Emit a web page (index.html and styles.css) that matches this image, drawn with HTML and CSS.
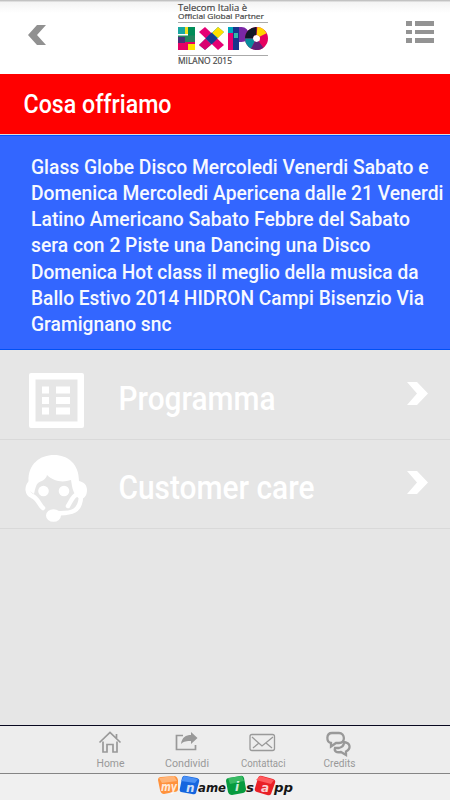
FILE: index.html
```html
<!DOCTYPE html>
<html lang="it">
<head>
<meta charset="utf-8">
<title>Cosa offriamo</title>
<link rel="stylesheet" href="styles.css">
</head>
<body>
<header class="topbar">
  <svg class="back" width="20" height="22" viewBox="0 0 20 22"><path d="M10 1h9l-9 10 9 10h-9L1 11z"/></svg>
  <svg class="brand" width="96" height="70" viewBox="0 0 96 70">
    <g class="brand-text">
      <text x="3" y="11" font-size="9.500" textLength="69" lengthAdjust="spacingAndGlyphs">Telecom Italia è</text>
      <text x="3" y="19" font-size="8" textLength="86" lengthAdjust="spacingAndGlyphs">Official Global Partner</text>
      <text x="3" y="64" font-size="8.500" textLength="54" lengthAdjust="spacingAndGlyphs">MILANO 2015</text>
    </g>
    <path d="M3 22.500h90M3 55.500h90" stroke="#aaa"/>
    <g>
      <path fill="#f2e01c" d="M3 27h17v7H3z"/><path fill="#18a7a1" d="M3 27h7v7H3z"/>
      <path fill="#008d58" d="M13 27h7v15h-7z"/><path fill="#23845d" d="M3 35.500h17V42H3z"/>
      <path fill="#e50065" d="M3 42h17v8H3z"/><path fill="#463078" d="M3 37h7v6H3z"/>
      <path fill="#ffe100" d="M13 44h7v6h-7z"/>
      <path fill="#e50075" d="M24 32l6-5 19 18-6 5z"/><path fill="#00a5bd" d="M43 27l6 5-19 18-6-5z"/>
      <path fill="#ffe000" d="M37 33l6-6 6 5-6 6z"/><path fill="#173b90" d="M30.500 38.500l6-6 6 6-6 6z"/>
      <path fill="#d90070" d="M24 45l6.500-6.500 6 6L30 50z"/>
      <path fill="#00a9bd" d="M53 27h11v7H53z"/><path fill="#7927a5" d="M64 27h2.500a7.500 7.500 0 0 1 0 15H64z"/>
      <path fill="#e60073" d="M53 33h5v17h-5z"/><path fill="#19358c" d="M58 27h6v23h-6z"/>
      <path fill="#31baa8" d="M59 33h4v5h-4z"/>
    </g>
    <g fill="none" stroke-width="8">
      <circle cx="81.500" cy="38.500" r="7.500" stroke="#e60060"/>
      <path stroke="#111827" d="M81.500 31a7.500 7.500 0 0 0-7.500 7.500"/>
      <path stroke="#078d9b" d="M74 38.500a7.500 7.500 0 0 0 4 6.600"/>
      <path stroke="#ffd400" d="M82 31a7.500 7.500 0 0 1 6 4"/>
      <path stroke="#612078" d="M78 45a7.500 7.500 0 0 0 8-.5"/>
    </g>
  </svg>
  <svg class="menu" width="28" height="23" viewBox="0 0 28 23"><path d="M0 0h6v5H0zM9 0h19v5H9zM0 9h6v4H0zM9 9h19v4H9zM0 17h6v5H0zM9 17h19v5H9z"/></svg>
</header>
<h1 class="title"><svg width="450" height="59"><text x="23.500" y="38.500" textLength="148" lengthAdjust="spacingAndGlyphs">Cosa offriamo</text></svg></h1>
<section class="description">
  <svg width="450" height="213">
    <text x="31" y="37.600" textLength="397.500" lengthAdjust="spacingAndGlyphs">Glass Globe Disco Mercoledi Venerdi Sabato e</text>
    <text x="31" y="63.800" textLength="412.500" lengthAdjust="spacingAndGlyphs">Domenica Mercoledi Apericena dalle 21 Venerdi</text>
    <text x="31" y="90.200" textLength="379" lengthAdjust="spacingAndGlyphs">Latino Americano Sabato Febbre del Sabato</text>
    <text x="31" y="116.200" textLength="339.500" lengthAdjust="spacingAndGlyphs">sera con 2 Piste una Dancing una Disco</text>
    <text x="31" y="142.600" textLength="387.500" lengthAdjust="spacingAndGlyphs">Domenica Hot class il meglio della musica da</text>
    <text x="31" y="168.800" textLength="393" lengthAdjust="spacingAndGlyphs">Ballo Estivo 2014 HIDRON Campi Bisenzio Via</text>
    <text x="31" y="195" textLength="140.500" lengthAdjust="spacingAndGlyphs">Gramignano snc</text>
  </svg>
</section>
<main class="list">
  <a class="row">
    <svg width="450" height="89" viewBox="0 0 450 89">
      <path fill-rule="evenodd" d="M31 23h51a2 2 0 0 1 2 2v51a2 2 0 0 1-2 2H31a2 2 0 0 1-2-2V25a2 2 0 0 1 2-2zM35.500 29.500v42h42v-42z"/>
      <path d="M42 36.500h7v7h-7zM56 36.500h14v7H56zM42 47h7v7h-7zM56 47h14v7H56zM42 57.500h7v7h-7zM56 57.500h14v7H56z"/>
      <text x="118.500" y="60" textLength="157" lengthAdjust="spacingAndGlyphs">Programma</text>
      <path d="M407 32h10l11 11.500L417 55h-10l10-11.500z"/>
    </svg>
  </a>
  <a class="row">
    <svg width="450" height="88" viewBox="0 0 450 88">
      <path d="M28.500 41C28 24 40 15 54 15s25 9 25 26c5 1 8 4 8 9 0 6-3 9-7 9-4-2-7-7-8-13l-1-6c-9 3-18 1-24-5-1 5-6 6-9 8-2 2-3 6-4 11l-6-4z"/>
      <path class="line" d="M31 42c-5 5-4 12 1 14 6 2 7 9 11 12M76 55c-3 1-5 6-8 11M81 57c-1 14-8 17-26 16"/>
      <circle cx="43.500" cy="51" r="5.300"/><circle cx="64" cy="51" r="5.300"/>
      <ellipse cx="53.500" cy="75.500" rx="7.500" ry="6.300"/>
      <text x="118.500" y="59" textLength="196" lengthAdjust="spacingAndGlyphs">Customer care</text>
      <path d="M407 31h10l11 11.500L417 54h-10l10-11.500z"/>
    </svg>
  </a>
</main>
<nav class="tabs">
  <svg width="450" height="47" viewBox="0 0 450 47">
    <g class="icons">
      <path d="M99.500 16.500l10.500-10 10.500 10M116.500 12V8M103 15.500v10.500h4v-7.500h6v7.500h4V15.500"/>
      <path d="M183 9.500h-6.500v14h19V19"/>
      <path class="solid" d="M181 18c1-7 5-9 10-9V6l6.500 6-6.500 6v-3c-4 0-7 0-10 3z"/>
      <g stroke-width="1.300"><rect x="250" y="8.500" width="24.500" height="16" rx="2"/><path d="M252 11l10 9 11-9M253 22l6-5M272 22l-6-5"/></g>
      <g stroke-width="2.300"><path d="M332 7h7c6 0 7 10 0 10h-3l-5 3.500V17c-5-1-5-10 1-10z"/><path d="M344 16c7 1 7 7 2 9.500V29l-5-3c-5 1-7-1-6-4h4c4-1 5-3 5-6z"/></g>
    </g>
    <text x="96.500" y="41" textLength="28" lengthAdjust="spacingAndGlyphs">Home</text>
    <text x="165" y="41" textLength="44" lengthAdjust="spacingAndGlyphs">Condividi</text>
    <text x="241" y="41" textLength="44.500" lengthAdjust="spacingAndGlyphs">Contattaci</text>
    <text x="323.500" y="41" textLength="32" lengthAdjust="spacingAndGlyphs">Credits</text>
  </svg>
</nav>
<footer class="credit">
  <svg width="450" height="25" viewBox="0 0 450 25">
    <path fill="#ff923c" d="M158 6q0-3 3-3l13-1q3 0 4 4v9q0 3-4 3l-10 2q-3 0-4-4z"/><path fill="#ffb477" d="M159 4l15-2 3 5-15 2z"/>
    <path fill="#1465df" d="M182 4q1-3 4-2l11 2q3 1 2 4l-3 11q-1 2-4 1l-11-2q-2-1-1-4z"/><path fill="#4b91f5" d="M184 2l14 3-3 4-14-2z"/>
    <path fill="#079b3f" d="M226 7q0-3 3-3l11-2q3-1 4 2l2 11q0 3-3 4l-11 2q-3 0-4-3z"/><path fill="#39b963" d="M228 4l14-2 2 5-14 3z"/>
    <path fill="#e92127" d="M258 4q1-3 4-2l11 3q3 1 2 4l-4 11q-1 2-4 1l-10-3q-3-1-2-4z"/><path fill="#ff5b5e" d="M260 2l14 4-3 4-15-4z"/>
    <g class="pale"><text x="161" y="17" textLength="16" lengthAdjust="spacingAndGlyphs">my</text><text x="186" y="18">n</text><text x="235" y="17">i</text><text x="261" y="18">a</text></g>
    <g class="dark"><text x="198" y="18" textLength="28" lengthAdjust="spacingAndGlyphs">ame</text><text x="246" y="18" textLength="8" lengthAdjust="spacingAndGlyphs">s</text><text x="274" y="18" textLength="19" lengthAdjust="spacingAndGlyphs">pp</text></g>
  </svg>
</footer>
</body>
</html>
```

FILE: styles.css
```css
* { box-sizing: border-box; }
body { margin: 0; width: 450px; height: 800px; display: flex; flex-direction: column; overflow: hidden; background: #e6e6e6; font-family: Roboto, "Liberation Sans", sans-serif; }
svg { display: block; overflow: visible; }
.topbar { height: 74px; flex: none; display: flex; align-items: flex-start; padding: 0 16px 0 27px; background: linear-gradient(#bcbcbc 0, #c8c8c8 1px, #f3f3f3 2px, #fff 13px); }
.back { margin-top: 24px; fill: #919191; }
.brand { margin-left: 128px; }
.brand-text { font-family: "Open Sans", "Noto Sans", sans-serif; fill: #484848; stroke: #484848; stroke-width: .2px; }
.menu { margin-top: 21px; margin-left: auto; fill: #939393; }
.title { height: 61px; flex: none; margin: 0; background: #f00; border-bottom: 1px solid #ddd; font-size: 25.5px; font-weight: 500; }
.title text { fill: #fff; }
.description { height: 215px; flex: none; background: #36f; border-top: 1px solid #0054ff; border-bottom: 1px solid #0050f5; font-size: 20.5px; font-weight: 500; }
.description text { fill: #f7f9ff; }
.list { flex: 1; }
.row { display: block; border-bottom: 1px solid #d9d9d9; fill: #fff; font-size: 33px; font-weight: 500; }
.line { fill: none; stroke: #fff; stroke-width: 4.5; stroke-linecap: round; }
.tabs { height: 49px; flex: none; background: #ededed; border-top: 1px solid #080820; border-bottom: 1px solid #858585; font-size: 11.5px; fill: #999; }
.icons { fill: none; stroke: #999; stroke-width: 1.7; }
.solid { fill: #999; stroke: none; }
.credit { height: 26px; flex: none; background: #f0f0f0; font-family: "DejaVu Sans", sans-serif; font-size: 13px; font-style: italic; font-weight: bold; }
.pale { fill: #fff; font-size: 12px; opacity: .8; }
.dark { fill: #161616; }
```
